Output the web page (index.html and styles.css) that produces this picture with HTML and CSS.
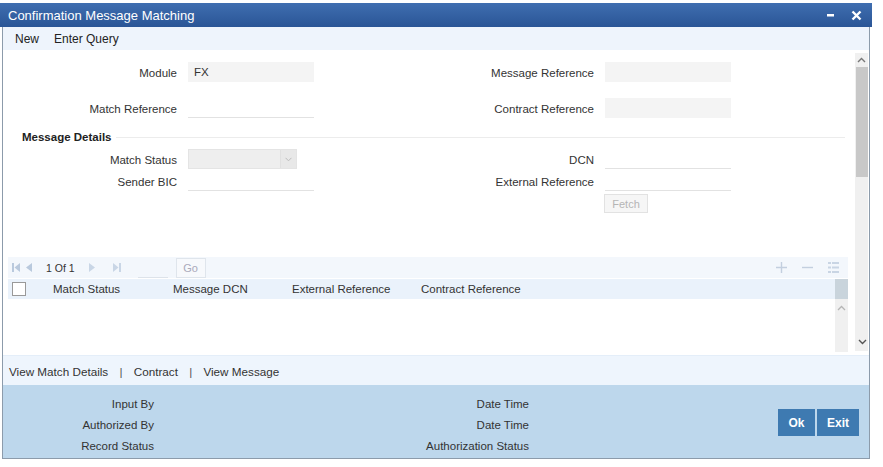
FILE: index.html
```html
<!DOCTYPE html>
<html>
<head>
<meta charset="utf-8">
<link rel="stylesheet" href="styles.css">
</head>
<body>
<div class="window">
  <div class="titlebar">
    <span class="title">Confirmation Message Matching</span>
    <span class="winbtns">
      <svg width="9" height="10" viewBox="0 0 9 10"><rect x="1" y="4" width="7" height="2.5" fill="#fff"/></svg>
      <svg width="11" height="11" viewBox="0 0 11 11"><path d="M1.5 1.5 L9.5 9.5 M9.5 1.5 L1.5 9.5" stroke="#fff" stroke-width="2.4"/></svg>
    </span>
  </div>
  <div class="body">
    <div class="toolbar"><span>New</span><span>Enter Query</span></div>
    <div class="main">
      <div class="content">
        <div class="form">
          <div class="row top1">
            <label>Module</label><div class="field filled">FX</div>
            <label>Message Reference</label><div class="field filled"></div>
          </div>
          <div class="row top2">
            <label>Match Reference</label><div class="field line"></div>
            <label>Contract Reference</label><div class="field filled"></div>
          </div>
          <div class="section"><span>Message Details</span><i></i></div>
          <div class="row r3">
            <label>Match Status</label>
            <div class="select"><span class="sel-arrow"><svg width="7" height="5" viewBox="0 0 7 5"><path d="M0.5 0.8 L3.5 3.8 L6.5 0.8" stroke="#bbb" fill="none"/></svg></span></div>
            <label>DCN</label><div class="field line"></div>
          </div>
          <div class="row r4">
            <label>Sender BIC</label><div class="field line"></div>
            <label>External Reference</label><div class="field line"></div>
          </div>
          <div class="fetchrow"><button class="fetch">Fetch</button></div>
        </div>
        <div class="grid">
          <div class="gtool">
            <svg class="nav" width="8" height="9" viewBox="0 0 8 9"><rect x="0" y="0" width="2" height="9" fill="#b9c9dd"/><path d="M8 0 L2.5 4.5 L8 9 Z" fill="#b9c9dd"/></svg>
            <svg class="nav" width="7" height="9" viewBox="0 0 7 9"><path d="M7 0 L1 4.5 L7 9 Z" fill="#b9c9dd"/></svg>
            <span class="pages">1 Of 1</span>
            <svg class="nav n3" width="7" height="9" viewBox="0 0 7 9"><path d="M0 0 L6 4.5 L0 9 Z" fill="#c9d6e6"/></svg>
            <svg class="nav n4" width="8" height="9" viewBox="0 0 8 9"><path d="M0 0 L5.5 4.5 L0 9 Z" fill="#c9d6e6"/><rect x="6" y="0" width="2" height="9" fill="#c9d6e6"/></svg>
            <span class="pageinput"></span>
            <button class="go">Go</button>
            <span class="gicons">
              <svg width="11" height="11" viewBox="0 0 11 11"><path d="M5.5 0 V11 M0 5.5 H11" stroke="#c3cfdf" stroke-width="1.4"/></svg>
              <svg width="11" height="11" viewBox="0 0 11 11"><path d="M0 5.5 H11" stroke="#c3cfdf" stroke-width="1.4"/></svg>
              <svg width="11" height="11" viewBox="0 0 11 11"><g fill="#c9d5e4"><rect x="0" y="0" width="3" height="2"/><rect x="4" y="0" width="7" height="2"/><rect x="0" y="4.5" width="3" height="2"/><rect x="4" y="4.5" width="7" height="2"/><rect x="0" y="9" width="3" height="2"/><rect x="4" y="9" width="7" height="2"/></g></svg>
            </span>
          </div>
          <div class="gbody">
            <div class="table">
              <div class="thead">
                <span class="cb"></span>
                <span class="col c1">Match Status</span>
                <span class="col c2">Message DCN</span>
                <span class="col c3">External Reference</span>
                <span class="col c4">Contract Reference</span>
              </div>
            </div>
            <div class="gscroll">
              <div class="gthumb"></div>
              <svg width="9" height="6" viewBox="0 0 9 6"><path d="M1 5 L4.5 1.5 L8 5" stroke="#b5b5b5" stroke-width="1.3" fill="none"/></svg>
            </div>
          </div>
        </div>
      </div>
      <div class="vscroll">
        <svg class="up" width="9" height="6" viewBox="0 0 9 6"><path d="M1 5 L4.5 1.5 L8 5" stroke="#777" stroke-width="1.4" fill="none"/></svg>
        <div class="thumb"></div>
        <div class="track"></div>
        <svg class="down" width="9" height="6" viewBox="0 0 9 6"><path d="M1 1 L4.5 4.5 L8 1" stroke="#555" stroke-width="1.4" fill="none"/></svg>
      </div>
    </div>
    <div class="links">View Match Details <span class="sep">|</span> Contract <span class="sep">|</span> View Message</div>
    <div class="footer">
      <div class="audit">
        <span>Input By</span><span>Date Time</span>
        <span>Authorized By</span><span>Date Time</span>
        <span>Record Status</span><span>Authorization Status</span>
      </div>
      <div class="btns"><button class="btn ok">Ok</button><button class="btn exit">Exit</button></div>
    </div>
  </div>
</div>
</body>
</html>
```

FILE: styles.css
```css
* { box-sizing: border-box; }
html, body { margin: 0; padding: 0; background: #fff; }
body { font-family: "Liberation Sans", Arial, sans-serif; font-size: 11.5px; color: #333; }

.window { width: 872px; margin-top: 3px; }

.titlebar {
  height: 24px;
  background: linear-gradient(#3f6eb0, #2a5596);
  display: flex; align-items: center; justify-content: space-between;
  padding: 0 10px 0 8px;
}
.title { color: #fff; font-size: 13px; }
.winbtns { display: flex; align-items: center; gap: 16px; }
.winbtns svg { display: block; }

.body {
  margin-left: 2px; width: 868px;
  border-left: 1px solid #8c9bab; border-right: 1px solid #8c9bab; border-bottom: 1px solid #8c9bab;
}
.toolbar {
  height: 23px; background: #eef4fc;
  display: flex; align-items: center; gap: 15px; padding: 1px 0 0 12px;
  font-size: 12px; color: #222;
}

.main { height: 305px; display: flex; }
.content { flex: 1; display: flex; flex-direction: column; }

.form { padding-top: 12px; }
.row {
  display: grid; grid-template-columns: 174px 126px 269px 126px; column-gap: 11px;
  height: 20px; align-items: center;
}
.row label { text-align: right; color: #333; padding-top: 2px; }
.top1 { margin-bottom: 16px; }
.field { height: 20px; }
.filled { background: #f4f4f4; padding: 4px 6px; color: #333; line-height: 12px; }
.line { border-bottom: 1px solid #e2e2e2; }

.section { display: flex; align-items: center; margin: 12px 10px 5px 19px; height: 14px; }
.section span { font-weight: bold; color: #222; }
.section i { flex: 1; border-top: 1px solid #ececec; margin-left: 4px; }

.r3 { margin-bottom: 2px; }
.select {
  width: 109px; height: 20px; background: #eeeeee; border: 1px solid #e4e4e4;
  display: flex; justify-content: flex-end;
}
.sel-arrow { width: 16px; border-left: 1px solid #e0e0e0; display: flex; align-items: center; justify-content: center; background: #e8e8e8; }

.fetchrow { padding-left: 601px; margin-top: 3px; }
.fetch {
  width: 44px; height: 19px; border: 1px solid #e2e2e2; background: #f6f6f6;
  font-family: inherit; font-size: 11px; color: #b5b5b5; padding: 0;
}

.grid { margin: auto 0 3px 5px; width: 840px; }
.gtool {
  height: 21px; background: #f3f7fc; display: flex; align-items: center; padding-left: 4px;
}
.nav { display: block; margin-right: 5px; }
.pages { color: #333; margin: 0 14px 0 9px; font-size: 10.5px; }
.n3 { margin-right: 17px; }
.pageinput { width: 30px; height: 20px; border-bottom: 1px solid #dde3ea; margin-left: 12px; }
.go {
  margin-left: 8px; width: 30px; height: 20px; border: 1px solid #dfe5ec; background: #f7f9fc;
  font-family: inherit; font-size: 11px; color: #aab; padding: 0;
}
.gicons { margin-left: auto; display: flex; gap: 15px; margin-right: 9px; }
.gicons svg { display: block; }

.gbody { display: flex; height: 73px; margin-top: 1px; }
.table { flex: 1; }
.thead { height: 20px; background: #eaf2fb; display: flex; align-items: center; color: #333; }
.cb { width: 14px; height: 14px; border: 1px solid #999; background: #fff; margin-left: 4px; }
.col { display: block; }
.c1 { margin-left: 27px; width: 120px; }
.c2 { width: 119px; }
.c3 { width: 129px; }
.gscroll { width: 13px; background: #f0f0f0; display: flex; flex-direction: column; align-items: center; }
.gthumb { width: 13px; height: 20px; background: #c9d4dc; margin-bottom: 6px; }
.gscroll svg { display: block; }

.vscroll { width: 13px; margin: 3px 1px 4px 0; display: flex; flex-direction: column; align-items: center; background: #f0f0f0; }
.vscroll svg { display: block; }
.up { margin: 4px 0 4px; }
.thumb { width: 12px; height: 110px; background: #c8c8c8; }
.track { flex: 1; }
.down { margin-bottom: 6px; margin-left: 2px; }

.links {
  height: 30px; background: #eef5fd; display: flex; align-items: center; padding: 1px 0 0 6px;
  color: #333; white-space: pre; border-top: 1px solid #e4eef9; font-size: 11.7px;
}
.sep { margin: 0 8px; color: #555; }

.footer { height: 73px; background: #bdd7ec; display: flex; align-items: center; }
.audit {
  display: grid; grid-template-columns: 151px 375px; grid-auto-rows: 21px; align-items: center;
  align-self: flex-start; padding-top: 8px;
}
.audit span { text-align: right; color: #333; }
.btns { margin-left: auto; margin-right: 10px; margin-top: 2px; display: flex; gap: 2px; }
.btn {
  height: 27px; border: 0; background: #3e7ab1; color: #fff; font-family: inherit;
  font-weight: bold; font-size: 12px; padding: 0;
}
.ok { width: 37px; }
.exit { width: 42px; }
```
